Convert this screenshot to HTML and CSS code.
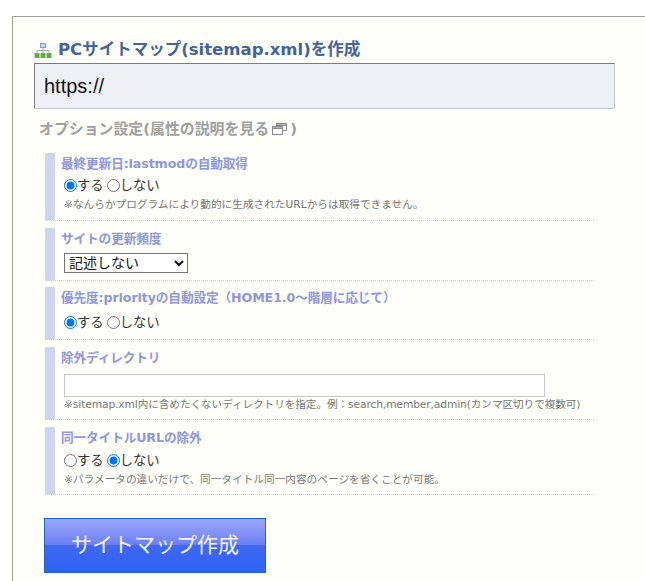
FILE: index.html
```html
<!DOCTYPE html>
<html lang="ja">
<head>
<meta charset="utf-8">
<title>サイトマップ作成</title>
<link rel="stylesheet" href="styles.css">
</head>
<body>
<main class="panel">
  <h2 class="title">
    <svg class="icon-tree" width="18" height="15" viewBox="0 0 18 15" aria-hidden="true">
      <rect x="6.500" y="0.500" width="5" height="4" fill="#c4d6f0" stroke="#7f9fcc" stroke-width="1"/>
      <path d="M9 5v5M3 10V7.500h12V10" fill="none" stroke="#a8a8a8" stroke-width="1"/>
      <rect x="0.500" y="10" width="5" height="5" fill="#5fb04a"/>
      <rect x="6.500" y="10" width="5" height="5" fill="#5fb04a"/>
      <rect x="12.500" y="10" width="5" height="5" fill="#5fb04a"/>
    </svg>
    PCサイトマップ(sitemap.xml)を作成
  </h2>
  <input class="url" type="text" value="https://">
  <h3 class="opt-title">オプション設定(属性の説明を見る
    <svg class="icon-win" width="15" height="12" viewBox="0 0 15 12" aria-hidden="true">
      <rect x="4.500" y="0.500" width="10" height="7" fill="#fff" stroke="#8a8a8a"/>
      <rect x="4.500" y="0.500" width="10" height="2" fill="#b4b4b4" stroke="#8a8a8a"/>
      <rect x="0.500" y="3.500" width="10" height="8" fill="#fff" stroke="#8a8a8a"/>
      <rect x="0.500" y="3.500" width="10" height="2" fill="#b4b4b4" stroke="#8a8a8a"/>
    </svg>
    )</h3>

  <section class="row row-a row-first">
    <h4 class="label">最終更新日:lastmodの自動取得</h4>
    <div class="choices">
      <label><input type="radio" name="a" checked>する</label>
      <label><input type="radio" name="a">しない</label>
    </div>
    <p class="note">※なんらかプログラムにより動的に生成されたURLからは取得できません。</p>
  </section>

  <section class="row row-b">
    <h4 class="label">サイトの更新頻度</h4>
    <select class="freq"><option>記述しない</option></select>
  </section>

  <section class="row row-b row-b-wide">
    <h4 class="label">優先度:priorityの自動設定（HOME1.0～階層に応じて）</h4>
    <div class="choices choices-low">
      <label><input type="radio" name="c" checked>する</label>
      <label><input type="radio" name="c">しない</label>
    </div>
  </section>

  <section class="row row-d">
    <h4 class="label">除外ディレクトリ</h4>
    <input class="dir" type="text">
    <p class="note note-tight">※sitemap.xml内に含めたくないディレクトリを指定。例：search,member,admin(カンマ区切りで複数可)</p>
  </section>

  <section class="row row-a">
    <h4 class="label">同一タイトルURLの除外</h4>
    <div class="choices choices-mid">
      <label><input type="radio" name="e">する</label>
      <label><input type="radio" name="e" checked>しない</label>
    </div>
    <p class="note">※パラメータの違いだけで、同一タイトル同一内容のページを省くことが可能。</p>
  </section>

  <button class="submit" type="button">サイトマップ作成</button>
</main>
</body>
</html>
```
FILE: styles.css
```css
* { box-sizing: border-box; }
html, body { margin: 0; padding: 0; background: #fff; overflow: hidden; height: 581px; }
body {
  padding: 16px 0 0 12px;
  font-family: "DejaVu Sans", "Noto Sans CJK JP", sans-serif;
  color: #333;
}
.panel {
  width: 660px;
  height: 565px;
  background: #fefff8;
  border: 1px solid #a0a0a0;
  border-width: 1px 0 0 1px;
  padding: 20px 0 0 21px;
}
.title {
  display: flex;
  align-items: center;
  gap: 6px;
  margin: 0;
  height: 26px;
  font-size: 16.500px;
  font-weight: 700;
  line-height: 26px;
  color: #44639f;
}
.icon-tree { flex: none; margin-top: 1px; }
.url {
  display: block;
  width: 581px;
  height: 46px;
  margin: 0;
  padding: 0 9px;
  border: 1px solid #c8c8d0;
  border-top-color: #7c7c7c;
  border-left-color: #7c7c7c;
  background: #eff0f6;
  font-family: "Liberation Sans", sans-serif;
  font-size: 20px;
  color: #111;
  border-radius: 0;
  outline: 0;
}
.opt-title {
  display: flex;
  align-items: center;
  gap: 3px;
  margin: 7px 0 0 5px;
  height: 26px;
  font-size: 14.900px;
  font-weight: 700;
  line-height: 26px;
  color: #a0a0a0;
}
.icon-win { flex: none; }
.row {
  width: 549px;
  margin-left: 11px;
  padding: 0 0 0 6px;
  border-left: 10px solid #d0d5ef;
  border-bottom: 1px dotted #c8c8d4;
}
.row-a { height: 68px; margin-bottom: 7px; }
.row-b { height: 53px; margin-bottom: 6px; }
.row-b-wide { margin-bottom: 7px; }
.row-d { height: 73px; margin-bottom: 7px; }
.row-first { margin-top: 11px; }
.label {
  margin: 0;
  height: 20px;
  font-size: 12.670px;
  font-weight: 700;
  line-height: 21px;
  letter-spacing: -0.120px;
  color: #8d95e6;
}
.choices {
  display: flex;
  gap: 3px;
  height: 22px;
  margin: 2px 0 0 3px;
  font-size: 13.330px;
  line-height: 22px;
  color: #333;
}
.choices-low { margin-top: 5px; }
.choices-mid { margin-top: 3px; }
.choices label { display: flex; align-items: center; }
.choices input { width: 13px; height: 13px; margin: -2px 0 0; }
.note {
  margin: 0 0 0 3px;
  font-size: 10.670px;
  line-height: 16px;
  color: #777;
  white-space: nowrap;
}
.note-tight { letter-spacing: -0.100px; }
.freq {
  display: block;
  width: 124px;
  height: 20px;
  margin: 5px 0 0 3px;
  padding: 0;
  font-family: "Liberation Sans", "Noto Sans CJK JP", sans-serif;
  font-size: 14px;
  background: #fff;
  color: #111;
}
.dir {
  display: block;
  width: 481px;
  height: 23px;
  margin: 7px 0 0 3px;
  padding: 0 4px;
  background: #fff;
  border: 1px solid #c8c8c8;
  outline: 0;
}
.submit {
  display: block;
  width: 222px;
  height: 55px;
  margin: 23px 0 0 10px;
  border: 1px solid #1c5fe0;
  background: linear-gradient(#9aa7fb 0%, #6d80f5 48%, #3f68f0 50%, #2e63f5 100%);
  font-family: "Noto Sans CJK JP", sans-serif;
  font-size: 21px;
  color: #f4f4ff;
  padding: 0 0 6px;
}
```
